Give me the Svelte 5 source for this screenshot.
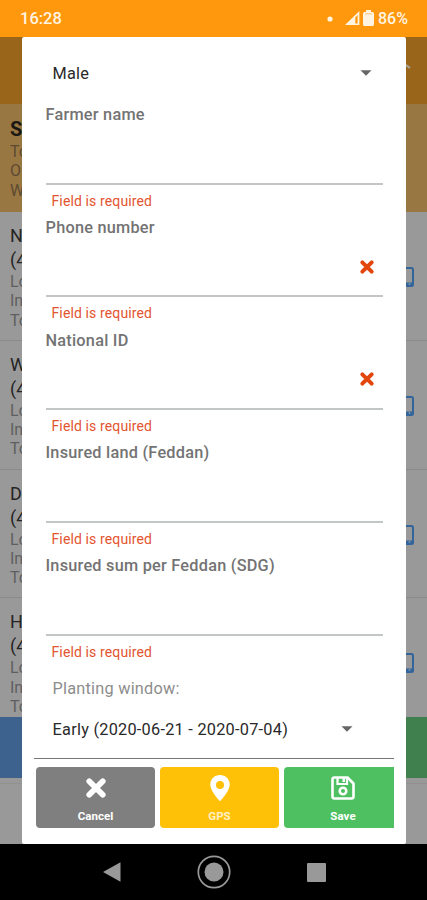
<script>
  const fields = [
    { label: 'Farmer name' },
    { label: 'Phone number', invalid: true },
    { label: 'National ID', invalid: true },
    { label: 'Insured land (Feddan)' },
    { label: 'Insured sum per Feddan (SDG)' }
  ];
  const rows = ['N', 'W', 'D', 'H'];
</script>

{#snippet caret()}
  <svg class="caret" width="12" height="6" viewBox="0 0 12 6"><path d="M.5.3h11L6 5.8z" fill="#666" /></svg>
{/snippet}

{#snippet cross(size, color)}
  <svg width={size} height={size} viewBox="0 0 20 20">
    <path d="M4.800 4.800L15.200 15.200M15.200 4.800L4.800 15.200" stroke={color} stroke-width="4.400" stroke-linecap="round" />
  </svg>
{/snippet}

<div class="screen">
  <header class="status">
    <span class="time">16:28</span>
    <svg class="dot" width="6" height="6"><circle cx="3" cy="3" r="2.6" fill="#fff4e2" /></svg>
    <svg class="signal" width="15" height="15" viewBox="0 0 15 15">
      <path d="M0 14L14.4 0V14z" fill="#fff4e2" /><path d="M10.3 6.5L12.6 4V12.5H10.3z" fill="#ff980c" />
    </svg>
    <svg class="battery" width="11" height="16" viewBox="0 0 11 16">
      <path d="M3 0h5v2h1.5q1.5 0 1.5 1.5v11q0 1.5-1.5 1.5h-8Q0 16 0 14.500v-11Q0 2 1.500 2H3z" fill="#fff4e2" />
      <path d="M2 3.800h7" stroke="#ffb854" stroke-width=".8" />
    </svg>
    <span class="percent">86%</span>
  </header>

  <main>
    <div class="page">
      <div class="toolbar">
        <svg width="6" height="6" viewBox="0 0 6 6"><path d="M0 1l4 3" stroke="#aaa49c" stroke-width="2" /></svg>
      </div>
      <div class="summary">
        <b>S</b><span>To</span><span>O</span><span>W</span>
      </div>
      <div class="list">
        {#each rows as name}
          <div class="row">
            <div class="info"><strong>{name}</strong><strong>(4</strong><span>Lo</span><span>In</span><span>To</span></div>
            <svg class="device" width="16" height="20" viewBox="0 0 16 20">
              <rect x="1" y="1" width="14" height="18" rx="1.500" fill="none" stroke="#33659b" stroke-width="2" />
              <path d="M1 15.500h14V19H1z" fill="#33659b" /><circle cx="11.500" cy="17" r="1" fill="#7893ae" />
            </svg>
          </div>
        {/each}
      </div>
      <div class="actions"><i></i><i></i></div>
      <div class="rest"></div>
    </div>

    <section class="dialog">
      <div class="select gender"><span>Male</span>{@render caret()}</div>
      {#each fields as field}
        <div class="field">
          <div class="label"><span>{field.label}</span></div>
          <div class="input">
            {#if field.invalid}{@render cross(18, '#e2460c')}{/if}
          </div>
          <div class="error">Field is required</div>
        </div>
      {/each}
      <div class="caption">Planting window:</div>
      <div class="select window"><span>Early (2020-06-21 - 2020-07-04)</span>{@render caret()}</div>
      <div class="buttons">
        <button class="cancel">{@render cross(26, '#fff')}<span>Cancel</span></button>
        <button class="gps">
          <svg width="26" height="26" viewBox="0 0 26 26">
            <path fill="#fff" fill-rule="evenodd" d="M13 0C7.500 0 3.300 4.100 3.300 9.400C3.300 16.300 13 26 13 26S22.700 16.300 22.700 9.400C22.700 4.100 18.500 0 13 0zM13 6a4 4 0 1 1 0 8a4 4 0 0 1 0-8z" />
          </svg>
          <span>GPS</span>
        </button>
        <button class="save">
          <svg width="26" height="26" viewBox="0 0 26 26">
            <g fill="none" stroke="#fff">
              <path d="M4.500 2.500H17.500L23.500 8.500V21.500Q23.500 23.500 21.500 23.500H4.500Q2.500 23.500 2.500 21.500V4.500Q2.500 2.500 4.500 2.500z" stroke-width="2.600" stroke-linejoin="round" />
              <path d="M7.500 3V9H17V3" stroke-width="2.200" />
              <circle cx="13" cy="16" r="3.300" stroke-width="2.500" />
            </g>
            <path d="M12.500 3h2.500v4h-2.500z" fill="#fff" />
          </svg>
          <span>Save</span>
        </button>
      </div>
    </section>
  </main>

  <nav>
    <svg width="18" height="20" viewBox="0 0 18 20"><path d="M0 10L17.500 0.300V19.700z" fill="#999" /></svg>
    <svg width="34" height="34" viewBox="0 0 34 34"><circle cx="17" cy="17" r="15.700" fill="none" stroke="#999" stroke-width="1.700" /><circle cx="17" cy="17" r="9.500" fill="#999" /></svg>
    <svg width="19" height="19"><rect width="19" height="19" rx="1" fill="#999" /></svg>
  </nav>
</div>

<style>
  .screen { width: 427px; height: 900px; display: flex; flex-direction: column; overflow: hidden; font-family: Roboto, sans-serif; background: #999; }
  svg { display: block; flex: none; }
  .status { height: 37px; flex: none; background: #ff980c; color: #fff4e2; display: flex; align-items: center; padding: 0 18px 0 20px; box-sizing: border-box; font-weight: 500; }
  .time { font-size: 16.500px; flex: 1; letter-spacing: 0; }
  .dot { margin-right: 12px; }
  .signal { margin-right: 3px; }
  .battery { margin: -1px 4px 0 0; }
  .percent { font-size: 16px; width: 31px; }
  main { height: 807px; position: relative; flex: none; }
  .page { height: 100%; display: flex; flex-direction: column; overflow: hidden; }
  .toolbar { height: 67px; flex: none; background: #99651a; display: flex; justify-content: flex-end; align-items: flex-start; padding: 27px 15px 0 0; box-sizing: border-box; }
  .summary { height: 108px; flex: none; background: #997743; display: flex; flex-direction: column; padding: 12px 0 0 10px; box-sizing: border-box; color: #5c4a32; }
  .summary b { font-size: 20px; line-height: 26px; color: #1b1712; }
  .summary span { font-size: 16px; line-height: 19.300px; }
  .list { height: 505px; flex: none; overflow: hidden; }
  .row { height: 128.800px; box-sizing: border-box; border-bottom: 1px solid #8b8b8b; padding: 12px 13.500px 0 10px; display: flex; justify-content: space-between; }
  .info { display: flex; flex-direction: column; color: #5f5f5f; font-size: 16px; }
  .info strong { font-size: 18px; font-weight: 400; line-height: 24px; color: #242424; }
  .info span { line-height: 19.300px; }
  .device { margin-top: 43px; }
  .actions { height: 61px; flex: none; display: flex; }
  .actions i { flex: 1; background: #3d628d; }
  .actions i + i { background: #3f804e; }
  .rest { height: 5px; border-bottom: 1px solid #919191; }

  .dialog { position: absolute; left: 22px; top: 0; width: 384px; height: 807px; background: #fff; border-radius: 2px; box-sizing: border-box; padding: 5px 12px 0; }
  .select { display: flex; align-items: center; justify-content: space-between; font-size: 16.300px; letter-spacing: .26px; color: #292929; }
  .gender { height: 62px; padding: 0 22px 0 18.500px; }
  .field { height: 112.800px; padding: 0 11.500px; }
  .label { height: 21px; line-height: 21px; font-size: 16.300px; font-weight: 500; letter-spacing: .24px; color: #737373; white-space: nowrap; }
  .input { height: 57.500px; border-bottom: 2px solid #c3c6c6; display: flex; justify-content: flex-end; align-items: center; padding-right: 7px; }
  .error { padding: 6px 0 0 6px; font-size: 14px; line-height: 20px; letter-spacing: .12px; color: #e35430; }
  .caption { height: 41px; line-height: 41px; padding-left: 18.500px; font-size: 16.300px; letter-spacing: .24px; color: #8d8d8d; }
  .window { height: 50px; box-sizing: border-box; padding: 0 41px 8px 18.500px; border-bottom: 1px solid #777; }
  .buttons { display: flex; gap: 5px; padding: 8px 0 0 2px; }
  button { border: 0; border-radius: 4px; width: 119px; height: 61px; padding: 8px 0 0; display: flex; flex-direction: column; align-items: center; font: 700 11.500px/15px Roboto, sans-serif; letter-spacing: .05px; color: #fff; gap: 8px; }
  .cancel { background: #7f7f7f; }
  .gps { background: #ffc008; color: #fff0c4; }
  .save { background: #4ec062; width: 110px; border-radius: 4px 0 0 4px; padding-left: 8px; }
  nav { height: 56px; flex: none; background: #000; display: flex; align-items: center; justify-content: center; gap: 76px; padding-left: 1px; }
</style>
